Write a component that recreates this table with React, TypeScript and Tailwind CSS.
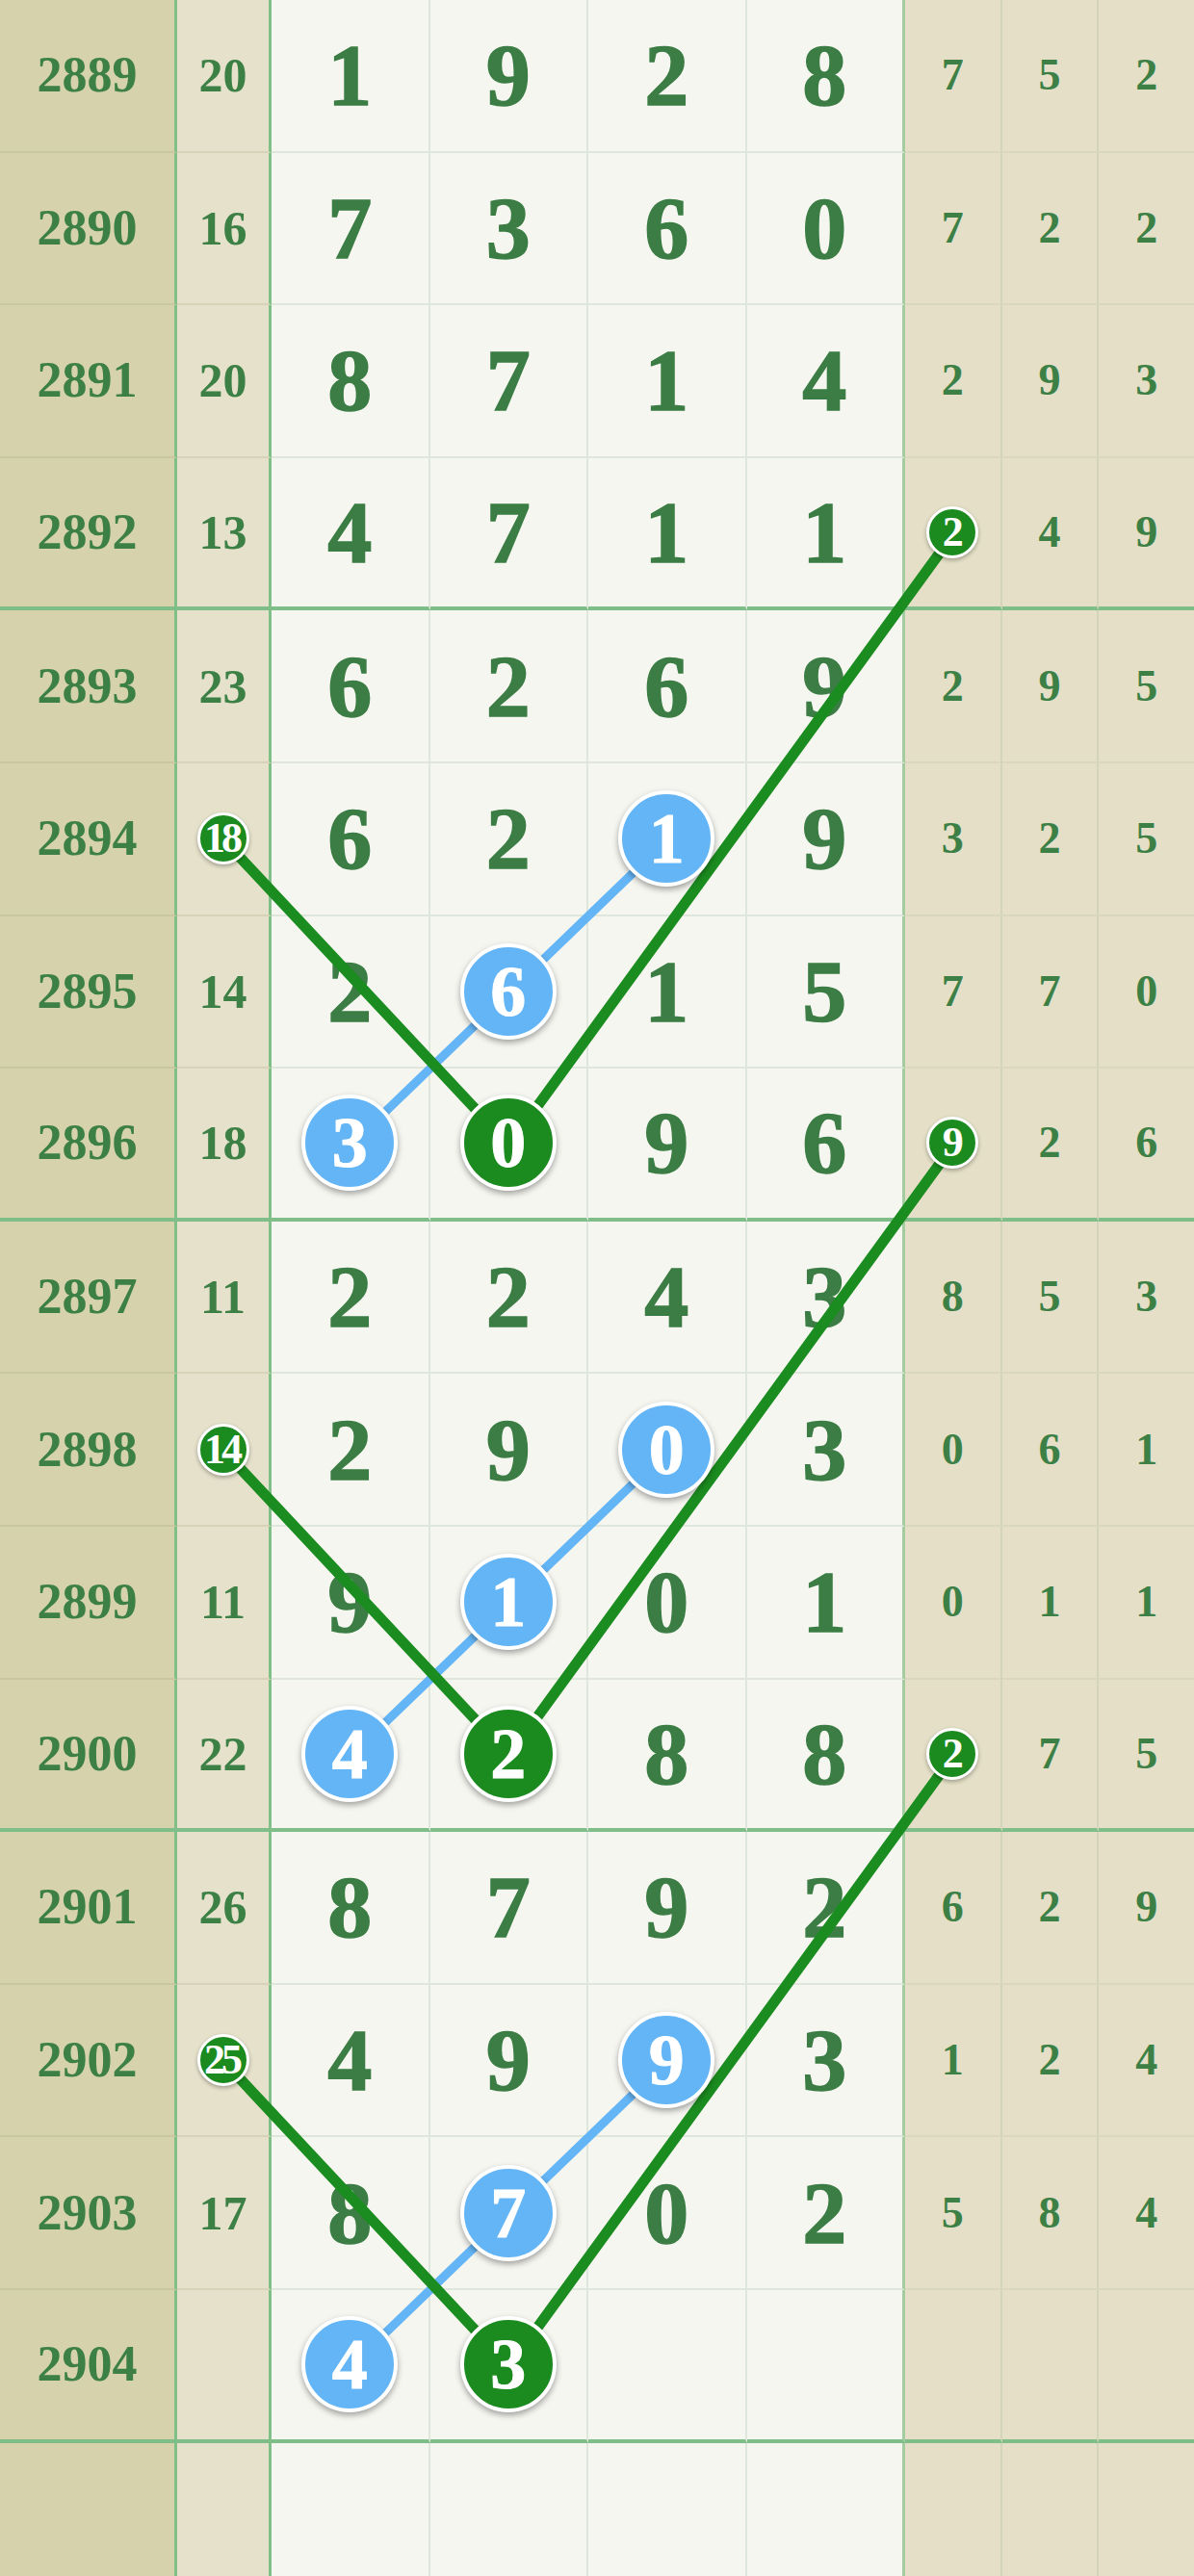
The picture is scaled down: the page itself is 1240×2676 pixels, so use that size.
import React from 'react';

type Mark = 'blue' | 'green' | undefined;

interface Row {
  issue: number | null;
  sum: number | null;
  main: (number | null)[];
  right: (number | null)[];
  sumBall?: boolean;
  marks?: Mark[];
  rightBall?: boolean;
}

const rows: Row[] = [
  { issue: 2889, sum: 20, main: [1, 9, 2, 8], right: [7, 5, 2] },
  { issue: 2890, sum: 16, main: [7, 3, 6, 0], right: [7, 2, 2] },
  { issue: 2891, sum: 20, main: [8, 7, 1, 4], right: [2, 9, 3] },
  { issue: 2892, sum: 13, main: [4, 7, 1, 1], right: [2, 4, 9], rightBall: true },
  { issue: 2893, sum: 23, main: [6, 2, 6, 9], right: [2, 9, 5] },
  { issue: 2894, sum: 18, main: [6, 2, 1, 9], right: [3, 2, 5], sumBall: true, marks: [undefined, undefined, 'blue'] },
  { issue: 2895, sum: 14, main: [2, 6, 1, 5], right: [7, 7, 0], marks: [undefined, 'blue'] },
  { issue: 2896, sum: 18, main: [3, 0, 9, 6], right: [9, 2, 6], marks: ['blue', 'green'], rightBall: true },
  { issue: 2897, sum: 11, main: [2, 2, 4, 3], right: [8, 5, 3] },
  { issue: 2898, sum: 14, main: [2, 9, 0, 3], right: [0, 6, 1], sumBall: true, marks: [undefined, undefined, 'blue'] },
  { issue: 2899, sum: 11, main: [9, 1, 0, 1], right: [0, 1, 1], marks: [undefined, 'blue'] },
  { issue: 2900, sum: 22, main: [4, 2, 8, 8], right: [2, 7, 5], marks: ['blue', 'green'], rightBall: true },
  { issue: 2901, sum: 26, main: [8, 7, 9, 2], right: [6, 2, 9] },
  { issue: 2902, sum: 25, main: [4, 9, 9, 3], right: [1, 2, 4], sumBall: true, marks: [undefined, undefined, 'blue'] },
  { issue: 2903, sum: 17, main: [8, 7, 0, 2], right: [5, 8, 4], marks: [undefined, 'blue'] },
  { issue: 2904, sum: null, main: [4, 3, null, null], right: [null, null, null], marks: ['blue', 'green'] },
  { issue: null, sum: null, main: [null, null, null, null], right: [null, null, null] },
];

const ROW_H = 158.6;
const rowY = (r: number) => ROW_H * (r + 0.5);
const SUM_X = 232;
const mainX = (i: number) => 282 + 164.5 * (i + 0.5);
const rightX = (j: number) => 940 + 100 * (j + 0.5);

const serif = { fontFamily: '"Liberation Serif", "Times New Roman", serif' };

const BigBall = ({ value, color }: { value: number; color: 'blue' | 'green' }) => (
  <div
    className={`relative z-20 w-[100px] h-[100px] rounded-full border-[4px] border-white flex items-center justify-center shadow-[0_3px_6px_rgba(0,0,0,0.35)] ${
      color === 'blue' ? 'bg-[#64b5f6]' : 'bg-[#1b8a1f]'
    }`}
  >
    <span className="text-white font-bold text-[74px] leading-none [-webkit-text-stroke:1px_#ffffff]" style={serif}>
      {value}
    </span>
  </div>
);

const SmallBall = ({ value }: { value: number }) => (
  <div className="relative z-20 w-[54px] h-[54px] rounded-full border-[3px] border-white bg-[#1b8a1f] flex items-center justify-center shadow-[0_2px_4px_rgba(0,0,0,0.3)]">
    <span className="text-white font-bold text-[44px] leading-none tracking-[-4px] -ml-[3px]" style={serif}>
      {value}
    </span>
  </div>
);

export default function App() {
  const groups = [5, 9, 13];

  return (
    <div className="relative w-[1240px] h-[2676px] overflow-hidden bg-[#f5f6f0]" style={serif}>
      <div className="flex flex-col">
        {rows.map((row, r) => {
          const thick = r % 4 === 3;
          const bottom = thick ? 'border-b-4 border-b-[#7fbe88]' : 'border-b-2';
          return (
            <div key={r} className="flex h-[158.6px] shrink-0">
              {/* issue */}
              <div
                className={`w-[184px] shrink-0 flex items-center justify-center bg-[#d6d2ac] border-r-[3px] border-r-[#80bf88] ${bottom} ${
                  thick ? '' : 'border-b-[#c9c7a2]'
                }`}
              >
                <span className="text-[52px] font-bold leading-none text-[#3d8046]">{row.issue}</span>
              </div>
              {/* sum */}
              <div
                className={`w-[98px] shrink-0 flex items-center justify-center bg-[#e5e1cb] border-r-[3px] border-r-[#80bf88] ${bottom} ${
                  thick ? '' : 'border-b-[#d6d3b8]'
                }`}
              >
                {row.sumBall && row.sum !== null ? (
                  <SmallBall value={row.sum} />
                ) : (
                  <span className="text-[50px] font-bold leading-none text-[#3d8046]">{row.sum}</span>
                )}
              </div>
              {/* main digits */}
              {row.main.map((d, i) => {
                const mark = row.marks?.[i];
                return (
                  <div
                    key={i}
                    className={`w-[164.5px] shrink-0 flex items-center justify-center bg-[#f5f6f0] ${
                      i === 3 ? 'border-r-[3px] border-r-[#a3cda0]' : 'border-r-2 border-r-[#dfe6dc]'
                    } ${bottom} ${thick ? '' : 'border-b-[#dfe6dc]'}`}
                  >
                    {mark && d !== null ? (
                      <BigBall value={d} color={mark} />
                    ) : (
                      <span className="text-[92px] font-bold leading-none text-[#3b7d44] [-webkit-text-stroke:1.5px_#3b7d44]">
                        {d}
                      </span>
                    )}
                  </div>
                );
              })}
              {/* right digits */}
              {row.right.map((d, j) => (
                <div
                  key={j}
                  className={`flex-1 flex items-center justify-center bg-[#e4dfc6] ${
                    j < 2 ? 'border-r-2 border-r-[#d3d5ba]' : ''
                  } ${bottom} ${thick ? '' : 'border-b-[#d9d8bf]'}`}
                >
                  {j === 0 && row.rightBall && d !== null ? (
                    <SmallBall value={d} />
                  ) : (
                    <span className="text-[46px] font-bold leading-none text-[#3d8046]">{d}</span>
                  )}
                </div>
              ))}
            </div>
          );
        })}
      </div>

      {/* trend lines */}
      <svg className="absolute inset-0 z-10 pointer-events-none" width={1240} height={2676}>
        {groups.map((g) => (
          <polyline
            key={`b${g}`}
            points={`${mainX(0)},${rowY(g + 2)} ${mainX(1)},${rowY(g + 1)} ${mainX(2)},${rowY(g)}`}
            fill="none"
            stroke="#64b5f6"
            strokeWidth={9}
          />
        ))}
        {groups.map((g) => (
          <polyline
            key={`g${g}`}
            points={`${SUM_X},${rowY(g)} ${mainX(1)},${rowY(g + 2)} ${rightX(0)},${rowY(g - 2)}`}
            fill="none"
            stroke="#1b8c1f"
            strokeWidth={11}
          />
        ))}
      </svg>
    </div>
  );
}
